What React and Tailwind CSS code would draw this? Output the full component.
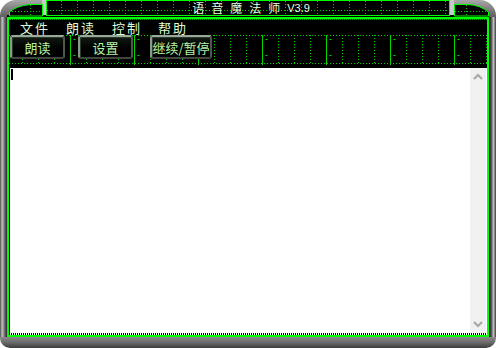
import React from 'react';

const cjk = "font-['Noto_Sans_CJK_SC','Noto_Sans',sans-serif]";

const TitleGrid = () => {
    const xs = [];
    for (let x = 14; x < 402; x += 16) xs.push(x);
    return (
        <svg className="absolute inset-0" width="402" height="14">
            <line x1="0" y1="9.5" x2="402" y2="9.5" stroke="#00d000" strokeDasharray="1 2" />
            {xs.map((x) => (
                <line key={x} x1={x + 0.5} y1="0" x2={x + 0.5} y2="14" stroke="#00d000" strokeDasharray="1 2" />
            ))}
        </svg>
    );
};

const ToolbarGrid = () => {
    const items = [];
    for (let x = 22; x < 487; x += 16) {
        const rx = x - 9 + 0.5;
        const major = (x - 6) % 64 === 0;
        if (major) {
            items.push(<line key={'m' + x} x1={rx} y1="1" x2={rx} y2="31" stroke="#00d800" />);
            items.push(<line key={'a' + x} x1={rx + 3} y1="5.5" x2={rx + 5} y2="5.5" stroke="#00d800" />);
            items.push(<line key={'b' + x} x1={rx + 3} y1="21.5" x2={rx + 5} y2="21.5" stroke="#00d800" />);
        } else {
            items.push(<line key={'d' + x} x1={rx} y1="1" x2={rx} y2="29" stroke="#00d000" strokeDasharray="1 2" />);
        }
    }
    return (
        <svg className="absolute inset-0" width="478" height="34">
            <line x1="0" y1="1.5" x2="478" y2="1.5" stroke="#00d000" strokeDasharray="1 2" />
            <line x1="0" y1="29.5" x2="478" y2="29.5" stroke="#00d000" strokeDasharray="1 2" />
            {items}
        </svg>
    );
};

const ToolButton = ({ label, width }) => (
    <div
        className={`${width} h-[24px] flex items-center justify-center rounded-[3px] border-2 border-t-[#9aaa9a] border-l-[#8a9a8a] border-r-[#4c564c] border-b-[#3e463e] bg-gradient-to-b from-[#141a14] to-[#000000] text-[13px] leading-none text-[#b4f4a8] shadow-[inset_1px_1px_0_#2a3a2a]`}
    >
        {label}
    </div>
);

const Corner = ({ side }) => (
    <div
        className={`w-[46px] h-[17px] relative bg-gradient-to-b from-[#a8a8a8] to-[#5e5e5e] ${
            side === 'left' ? 'rounded-tl-[16px]' : 'rounded-tr-[16px]'
        }`}
    >
        <svg className="absolute inset-0" width="46" height="17">
            {side === 'left' ? (
                <>
                    <rect x="42" y="0" width="4" height="17" fill="#c8c8c8" />
                    <rect x="7" y="15" width="39" height="2" fill="#000" />
                    <path d="M9.5 16 V12 Q16 6 30 4.5 H42.5 V16 Z" fill="#000" stroke="#00ff00" />
                    <line x1="12" y1="11.5" x2="42" y2="11.5" stroke="#00d000" strokeDasharray="1 2" />
                    <line x1="30.5" y1="5" x2="30.5" y2="16" stroke="#00d000" strokeDasharray="1 2" />
                </>
            ) : (
                <>
                    <rect x="0" y="0" width="4" height="17" fill="#c8c8c8" />
                    <rect x="0" y="15" width="39" height="2" fill="#000" />
                    <path d="M4.5 16 V4.5 H18 Q30 5 38.5 12 V16 Z" fill="#000" stroke="#00ff00" />
                    <line x1="5" y1="11.5" x2="36" y2="11.5" stroke="#00d000" strokeDasharray="1 2" />
                    <line x1="16.5" y1="5" x2="16.5" y2="16" stroke="#00d000" strokeDasharray="1 2" />
                </>
            )}
        </svg>
    </div>
);

const SideStrip = ({ side }) => (
    <div
        className={`w-[7px] ${
            side === 'left'
                ? 'bg-[linear-gradient(to_right,#4a4a4a_0%,#c4c4c4_30%,#7a7a7a_60%,#262626_100%)]'
                : 'bg-[linear-gradient(to_right,#101010_0%,#5a5a5a_35%,#c0c0c0_65%,#3a3a3a_100%)]'
        }`}
    />
);

export default function App() {
    return (
        <div className={`w-[496px] h-[348px] bg-white ${cjk}`}>
            <div className="flex flex-col w-[496px] h-[348px]">
                {/* title bar */}
                <div className="flex h-[17px]">
                    <Corner side="left" />
                    <div className="w-[404px] h-[17px] bg-black">
                        <div className="relative h-[16px] border border-[#00ff00] flex items-center justify-center">
                            <TitleGrid />
                            <span className="relative text-[12px] leading-[12px] text-[#e4ffe4] tracking-[7px] pl-[6px]">
                                语音魔法师
                            </span>
                            <span className="relative text-[11px] leading-[12px] text-[#e4ffe4] font-['Liberation_Sans',sans-serif]">
                                V3.9
                            </span>
                        </div>
                    </div>
                    <Corner side="right" />
                </div>

                {/* body */}
                <div className="flex h-[320px]">
                    <SideStrip side="left" />
                    <div className="w-[482px] flex flex-col border-2 border-[#00ff00] bg-black">
                        <div className="h-[15px] border-t border-dotted border-[#00b000] flex items-center pl-[11px] gap-[16px] text-[13px] leading-none text-[#dcffd8] tracking-[2px]">
                            <span>文件</span>
                            <span>朗读</span>
                            <span>控制</span>
                            <span>帮助</span>
                        </div>
                        <div className="relative h-[34px]">
                            <ToolbarGrid />
                            <div className="relative flex items-start pt-[1px] pl-[1px]">
                                <ToolButton label="朗读" width="w-[55px]" />
                                <div className="w-[13px]" />
                                <ToolButton label="设置" width="w-[55px]" />
                                <div className="w-[17px]" />
                                <ToolButton label="继续/暂停" width="w-[62px]" />
                            </div>
                        </div>
                        <div className="flex h-[265px]">
                            <div className="w-[1px] bg-black" />
                            <div className="flex-1 bg-white">
                                <div className="ml-[1px] mt-[1px] w-[2px] h-[11px] bg-black" />
                            </div>
                            <div className="w-[16px] bg-[#f0f0f0] flex flex-col justify-between items-center py-[5px]">
                                <svg width="10" height="7" viewBox="0 0 10 7">
                                    <polyline points="1,6 5,2 9,6" fill="none" stroke="#a6a6a6" strokeWidth="2" />
                                </svg>
                                <svg width="10" height="7" viewBox="0 0 10 7">
                                    <polyline points="1,1 5,5 9,1" fill="none" stroke="#a6a6a6" strokeWidth="2" />
                                </svg>
                            </div>
                            <div className="w-[1px] bg-white" />
                        </div>
                        <div className="h-[2px] bg-[repeating-linear-gradient(to_right,#000_0px,#000_1px,#fff_1px,#fff_2px)]" />
                    </div>
                    <SideStrip side="right" />
                </div>

                {/* bottom edge */}
                <div className="h-[11px] rounded-b-[10px] bg-gradient-to-b from-[#8a8a8a] via-[#6a6a6a] to-[#3c3c3c]" />
            </div>
        </div>
    );
}
